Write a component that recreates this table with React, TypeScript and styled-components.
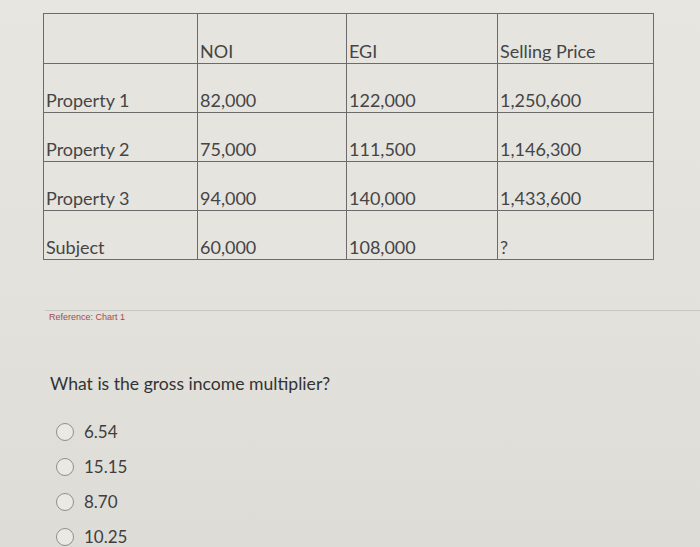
import React from "react";
import styled, { createGlobalStyle } from "styled-components";

const GlobalStyle = createGlobalStyle`
  html, body {
    margin: 0;
    padding: 0;
    background: #e4e2dd;
  }
  body {
    font-family: Lato, "Open Sans", "Liberation Sans", sans-serif;
    color: #3f3f3f;
  }
`;

const Page = styled.div`
  width: 700px;
  height: 547px;
  overflow: hidden;
  background: linear-gradient(180deg, #e8e6e1 0%, #e3e1dc 55%, #dedcd7 100%);
  padding-top: 13px;
  box-sizing: border-box;
`;

const Table = styled.table`
  margin-left: 43px;
  border-collapse: collapse;
  background: #e6e4df;
`;

const Cell = styled.td<{ $w: number; $header?: boolean }>`
  width: ${(p) => p.$w}px;
  height: ${(p) => (p.$header ? 50 : 49)}px;
  box-sizing: border-box;
  border: 1.5px solid #6b6b6b;
  padding: 0 0 2px 2px;
  vertical-align: bottom;
  font-size: 18px;
  line-height: 20px;
  color: #454545;
  text-align: left;
`;

const Reference = styled.div`
  margin: 50px 0 0 45px;
  border-top: 1px solid #c9c7c2;
  padding: 1px 0 0 4px;
  font-family: "Liberation Sans", Arial, sans-serif;
  font-size: 9px;
  color: #a54a48;
`;

const Question = styled.p`
  margin: 51px 0 0 50px;
  font-size: 17.6px;
  color: #333;
`;

const Options = styled.div`
  margin: 28px 0 0 56px;
  display: flex;
  flex-direction: column;
  gap: 15px;
`;

const Option = styled.label`
  display: flex;
  align-items: center;
  gap: 10px;
  font-size: 17px;
  line-height: 20px;
  color: #3e3e3e;
`;

const Radio = styled.span`
  width: 18px;
  height: 18px;
  border-radius: 50%;
  border: 1.5px solid #8f8f8f;
  background: #ebe9e4;
  box-sizing: border-box;
`;

const widths = [154, 149, 151, 156];

const rows = [
  ["", "NOI", "EGI", "Selling Price"],
  ["Property 1", "82,000", "122,000", "1,250,600"],
  ["Property 2", "75,000", "111,500", "1,146,300"],
  ["Property 3", "94,000", "140,000", "1,433,600"],
  ["Subject", "60,000", "108,000", "?"],
];

const answers = ["6.54", "15.15", "8.70", "10.25"];

export default function App() {
  return (
    <Page>
      <GlobalStyle />
      <Table>
        <tbody>
          {rows.map((row, i) => (
            <tr key={i}>
              {row.map((text, j) => (
                <Cell key={j} $w={widths[j]} $header={i === 0}>
                  {text}
                </Cell>
              ))}
            </tr>
          ))}
        </tbody>
      </Table>
      <Reference>Reference: Chart 1</Reference>
      <Question>What is the gross income multiplier?</Question>
      <Options>
        {answers.map((a) => (
          <Option key={a}>
            <Radio />
            {a}
          </Option>
        ))}
      </Options>
    </Page>
  );
}
